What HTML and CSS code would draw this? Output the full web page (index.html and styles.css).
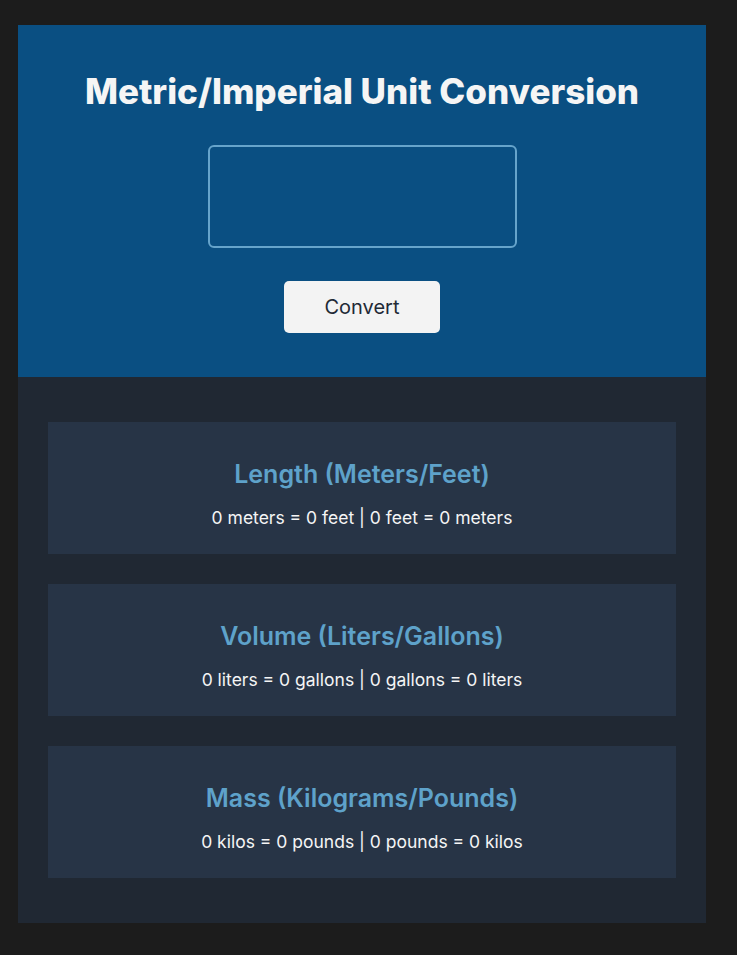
FILE: index.html
```html
<!DOCTYPE html>
<html lang="en">
<head>
<meta charset="utf-8">
<title>Metric/Imperial Unit Conversion</title>
<link rel="stylesheet" href="styles.css">
</head>
<body>
<main class="app">
  <header class="hero">
    <h1 class="hero-title">Metric/Imperial Unit Conversion</h1>
    <input class="hero-input" type="text" aria-label="Value">
    <button class="hero-button" type="button">Convert</button>
  </header>
  <section class="results">
    <article class="card">
      <h2 class="card-title">Length (Meters/Feet)</h2>
      <p class="card-text">0 meters = 0 feet | 0 feet = 0 meters</p>
    </article>
    <article class="card">
      <h2 class="card-title">Volume (Liters/Gallons)</h2>
      <p class="card-text">0 liters = 0 gallons | 0 gallons = 0 liters</p>
    </article>
    <article class="card">
      <h2 class="card-title">Mass (Kilograms/Pounds)</h2>
      <p class="card-text">0 kilos = 0 pounds | 0 pounds = 0 kilos</p>
    </article>
  </section>
</main>
</body>
</html>
```
FILE: styles.css
```css
* { box-sizing: border-box; }

html, body {
  margin: 0;
  padding: 0;
  background: #1c1c1c;
}

body {
  font-family: Inter, "Noto Sans", sans-serif;
  padding: 25px 31px 32px 18px;
}

.app {
  width: 688px;
  display: flex;
  flex-direction: column;
}

.hero {
  background: #0a4f82;
  display: flex;
  flex-direction: column;
  align-items: center;
  padding: 46px 0 44px;
}

.hero-title {
  margin: 0;
  font-size: 35px;
  line-height: 41px;
  font-weight: 800;
  color: #f5f5f5;
}

.hero-input {
  margin-top: 33px;
  width: 309px;
  height: 103px;
  background: transparent;
  border: 2px solid #66a4cb;
  border-radius: 6px;
  outline: none;
}

.hero-button {
  margin-top: 33px;
  width: 156px;
  height: 52px;
  background: #f3f3f3;
  border: none;
  border-radius: 5px;
  font-family: Inter, "Noto Sans", sans-serif;
  font-size: 20px;
  color: #1f2a36;
}

.results {
  background: #202833;
  display: flex;
  flex-direction: column;
  gap: 30px;
  padding: 45px 30px;
}

.card {
  background: #273446;
  height: 132px;
  display: flex;
  flex-direction: column;
  align-items: center;
  padding-top: 37px;
}

.card-title {
  margin: 0;
  font-size: 25px;
  line-height: 30px;
  font-weight: 600;
  color: #5ea2ca;
}

.card-text {
  margin: 18px 0 0;
  font-size: 17.5px;
  line-height: 22px;
  color: #f5f5f5;
}
```
